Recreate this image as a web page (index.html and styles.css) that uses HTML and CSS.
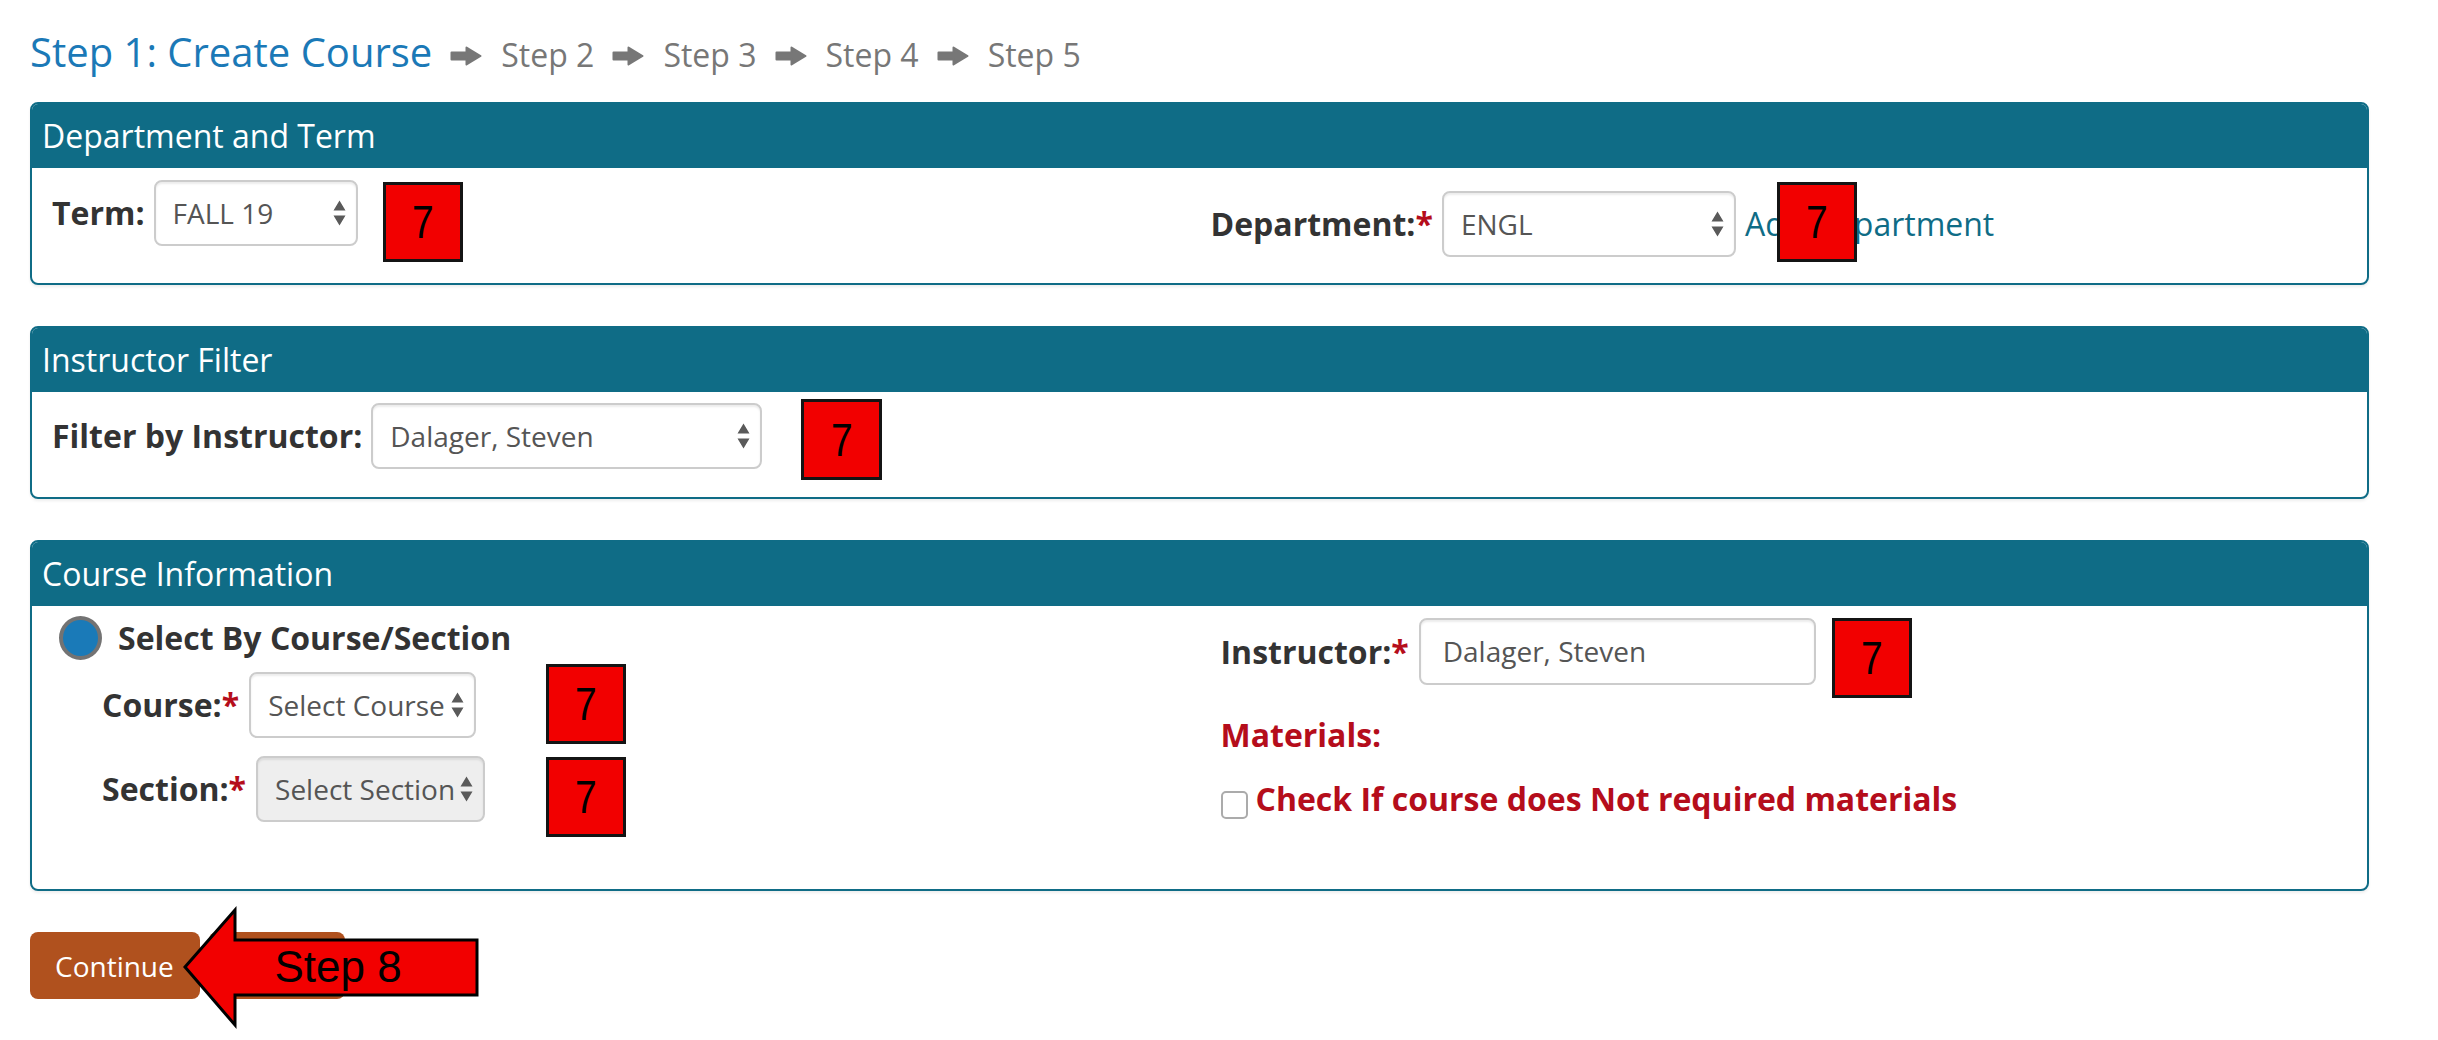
FILE: index.html
```html
<!DOCTYPE html>
<html lang="en">
<head>
<meta charset="utf-8">
<title>Step 1: Create Course</title>
<link rel="stylesheet" href="styles.css">
</head>
<body>
<div class="page">
  <div class="steps">
    <span class="step-current">Step 1: Create Course</span>
    <svg class="step-arrow" viewBox="0 0 32 20"><path d="M1.5 6.5H16.5V1.5L30.5 10L16.5 18.5V13.5H1.5Z"/></svg>
    <span class="step">Step 2</span>
    <svg class="step-arrow" viewBox="0 0 32 20"><path d="M1.5 6.5H16.5V1.5L30.5 10L16.5 18.5V13.5H1.5Z"/></svg>
    <span class="step">Step 3</span>
    <svg class="step-arrow" viewBox="0 0 32 20"><path d="M1.5 6.5H16.5V1.5L30.5 10L16.5 18.5V13.5H1.5Z"/></svg>
    <span class="step">Step 4</span>
    <svg class="step-arrow" viewBox="0 0 32 20"><path d="M1.5 6.5H16.5V1.5L30.5 10L16.5 18.5V13.5H1.5Z"/></svg>
    <span class="step">Step 5</span>
  </div>

  <section class="panel">
    <div class="panel-heading">Department and Term</div>
    <div class="panel-body body-dept">
      <div class="col">
        <div class="field">
          <span class="label">Term:</span>
          <div class="select w-term"><span>FALL 19</span><svg class="updown" viewBox="0 0 13 26"><path d="M0.5 10.5L6.5 0.5L12.5 10.5Z M0.5 15.5L6.5 25.5L12.5 15.5Z"/></svg></div>
        </div>
      </div>
      <div class="col col-dept">
        <div class="field">
          <span class="label">Department:<span class="req">*</span></span>
          <div class="select w-dept"><span>ENGL</span><svg class="updown" viewBox="0 0 13 26"><path d="M0.5 10.5L6.5 0.5L12.5 10.5Z M0.5 15.5L6.5 25.5L12.5 15.5Z"/></svg></div>
          <a class="link" href="#">Add Department</a>
        </div>
      </div>
    </div>
  </section>

  <section class="panel">
    <div class="panel-heading">Instructor Filter</div>
    <div class="panel-body body-filter">
      <div class="field">
        <span class="label">Filter by Instructor:</span>
        <div class="select w-filter"><span>Dalager, Steven</span><svg class="updown" viewBox="0 0 13 26"><path d="M0.5 10.5L6.5 0.5L12.5 10.5Z M0.5 15.5L6.5 25.5L12.5 15.5Z"/></svg></div>
      </div>
    </div>
  </section>

  <section class="panel">
    <div class="panel-heading">Course Information</div>
    <div class="panel-body body-course">
      <div class="col col-course">
        <div class="radio-row">
          <span class="radio"></span>
          <span class="label">Select By Course/Section</span>
        </div>
        <div class="field sub-field first">
          <span class="label">Course:<span class="req">*</span></span>
          <div class="select w-course"><span>Select Course</span><svg class="updown" viewBox="0 0 13 26"><path d="M0.5 10.5L6.5 0.5L12.5 10.5Z M0.5 15.5L6.5 25.5L12.5 15.5Z"/></svg></div>
        </div>
        <div class="field sub-field second">
          <span class="label">Section:<span class="req">*</span></span>
          <div class="select w-section disabled"><span>Select Section</span><svg class="updown" viewBox="0 0 13 26"><path d="M0.5 10.5L6.5 0.5L12.5 10.5Z M0.5 15.5L6.5 25.5L12.5 15.5Z"/></svg></div>
        </div>
      </div>
      <div class="col col-instr">
        <div class="field">
          <span class="label label-instr">Instructor:<span class="req">*</span></span>
          <div class="input">Dalager, Steven</div>
        </div>
        <div class="materials">Materials:</div>
        <div class="check-row">
          <span class="checkbox"></span>
          <span class="check-text">Check If course does Not required materials</span>
        </div>
      </div>
    </div>
  </section>

  <div class="actions">
    <button class="btn">Continue</button>
    <button class="btn btn-hidden" aria-hidden="true"></button>
  </div>

  <div class="anno a-term"><span>7</span></div>
  <div class="anno a-dept"><span>7</span></div>
  <div class="anno a-filter"><span>7</span></div>
  <div class="anno a-course"><span>7</span></div>
  <div class="anno a-section"><span>7</span></div>
  <div class="anno a-instr"><span>7</span></div>

  <svg class="big-arrow" viewBox="0 0 300 125">
    <polygon points="5,62 55,5 55,35 297,35 297,90 55,90 55,120"/>
    <text x="94.5" y="77">Step 8</text>
  </svg>
</div>
</body>
</html>
```

FILE: styles.css
```css
html, body {
  margin: 0;
  padding: 0;
  background: #ffffff;
}

body {
  font-family: "Open Sans", "DejaVu Sans", sans-serif;
  color: #333333;
}

.page {
  position: relative;
  width: 2438px;
  height: 1040px;
  box-sizing: border-box;
  padding: 28px 69px 0 30px;
  overflow: hidden;
}

/* ---------- steps ---------- */
.steps {
  display: flex;
  align-items: baseline;
  height: 48px;
  margin-bottom: 26px;
}

.step-current {
  font-size: 40px;
  line-height: 48px;
  color: #1b79b7;
}

.step {
  font-size: 32px;
  line-height: 48px;
  color: #777777;
}

.step-arrow {
  align-self: flex-start;
  width: 32px;
  height: 20px;
  margin: 18px 19px 0 18px;
  flex: none;
}

.step-arrow path {
  fill: #777777;
  stroke: #777777;
  stroke-width: 2;
  stroke-linejoin: round;
}

/* ---------- panels ---------- */
.panel {
  border: 2px solid #0f6c86;
  border-radius: 8px;
  margin-bottom: 41px;
  overflow: hidden;
  background: #ffffff;
  box-shadow: 0 2px 3px rgba(0, 0, 0, 0.07);
}

.panel-heading {
  height: 64px;
  line-height: 64px;
  padding: 0 10px;
  background: #0f6c86;
  color: #ffffff;
  font-size: 32px;
}

.panel-body {
  display: grid;
  grid-template-columns: 1fr 1fr;
}

.body-dept {
  padding: 12px 20px 26px;
  height: 77px;
}

.col-dept {
  padding-left: 11px;
  padding-top: 11px;
}

.body-filter {
  display: block;
  padding: 11px 20px 28px;
  height: 66px;
}

.body-course {
  padding: 0 20px;
}

.col-course {
  padding-top: 10px;
  padding-bottom: 67px;
}

.col-instr {
  padding-top: 12px;
  padding-left: 21px;
}

/* ---------- fields ---------- */
.field {
  display: flex;
  align-items: center;
}

.label {
  font-weight: 700;
  font-size: 32px;
  line-height: 44px;
  color: #333333;
  margin-right: 9px;
  white-space: nowrap;
}

.req {
  color: #b50d1b;
}

.select {
  display: flex;
  align-items: center;
  justify-content: space-between;
  box-sizing: border-box;
  height: 66px;
  border: 2px solid #cccccc;
  border-radius: 8px;
  background: #ffffff;
  padding: 0 10px 0 17px;
  font-size: 28px;
  color: #555555;
  white-space: nowrap;
  box-shadow: inset 0 2px 2px rgba(0, 0, 0, 0.075);
}

.select.disabled {
  background: #eeeeee;
}

.updown {
  width: 13px;
  height: 26px;
  flex: none;
}

.updown path {
  fill: #5a5a5a;
}

.w-term { width: 204px; }
.w-dept { width: 294px; }
.w-filter { width: 391px; }
.w-course { width: 227px; }
.w-section { width: 229px; padding-left: 17px; }

.link {
  margin-left: 9px;
  font-size: 32px;
  line-height: 44px;
  color: #0f6c86;
  text-decoration: none;
  white-space: nowrap;
}

/* ---------- course info ---------- */
.radio-row {
  display: flex;
  align-items: center;
  height: 44px;
}

.radio {
  width: 43px;
  height: 44px;
  box-sizing: border-box;
  border-radius: 50%;
  border: 4px solid #737373;
  background: #1a7ab8;
  margin-left: 7px;
  margin-right: 16px;
  flex: none;
}

.sub-field {
  margin-left: 50px;
}

.sub-field .label {
  margin-right: 10px;
}

.sub-field.first {
  margin-top: 12px;
}

.sub-field.second {
  margin-top: 18px;
}

.label-instr {
  margin-right: 10px;
}

.input {
  box-sizing: border-box;
  width: 397px;
  height: 67px;
  line-height: 63px;
  border: 2px solid #cccccc;
  border-radius: 8px;
  padding-left: 22px;
  font-size: 28px;
  color: #555555;
  box-shadow: inset 0 2px 2px rgba(0, 0, 0, 0.075);
}

.materials {
  margin-top: 28px;
  font-size: 32px;
  line-height: 44px;
  font-weight: 700;
  color: #b50d1b;
}

.check-row {
  display: flex;
  align-items: center;
  margin-top: 20px;
  height: 44px;
}

.checkbox {
  width: 27px;
  height: 28px;
  box-sizing: border-box;
  border: 2px solid #ababab;
  border-radius: 5px;
  background: #ffffff;
  margin-top: 11px;
  margin-right: 8px;
  flex: none;
}

.check-text {
  font-size: 32px;
  line-height: 44px;
  font-weight: 700;
  color: #b50d1b;
  white-space: nowrap;
}

/* ---------- actions ---------- */
.actions {
  display: flex;
  gap: 9px;
}

.btn {
  height: 67px;
  padding: 0 26px 0 25px;
  border: none;
  border-radius: 8px;
  background: #b0511e;
  color: #ffffff;
  font-family: "Open Sans", sans-serif;
  font-size: 28px;
  cursor: pointer;
}

.btn-hidden {
  width: 136px;
  padding: 0;
}

/* ---------- annotation overlay ---------- */
.anno {
  position: absolute;
  width: 80px;
  height: 80px;
  box-sizing: border-box;
  background: #f20000;
  border: 3px solid #141414;
  display: flex;
  align-items: center;
  justify-content: center;
  font-family: "Liberation Sans", Arial, sans-serif;
  font-size: 46px;
  color: #000000;
}

.anno span {
  display: inline-block;
  transform: scaleX(0.85);
}

.a-term { left: 383px; top: 182px; }
.a-dept { left: 1777px; top: 182px; }
.a-filter { left: 801px; top: 399px; width: 81px; height: 81px; }
.a-course { left: 546px; top: 664px; }
.a-section { left: 546px; top: 757px; }
.a-instr { left: 1832px; top: 618px; }

.big-arrow {
  position: absolute;
  left: 180px;
  top: 905px;
  width: 300px;
  height: 125px;
}

.big-arrow polygon {
  fill: #f20000;
  stroke: #000000;
  stroke-width: 3;
  stroke-linejoin: miter;
}

.big-arrow text {
  font-family: "Liberation Sans", Arial, sans-serif;
  font-size: 44px;
  fill: #000000;
}
```
